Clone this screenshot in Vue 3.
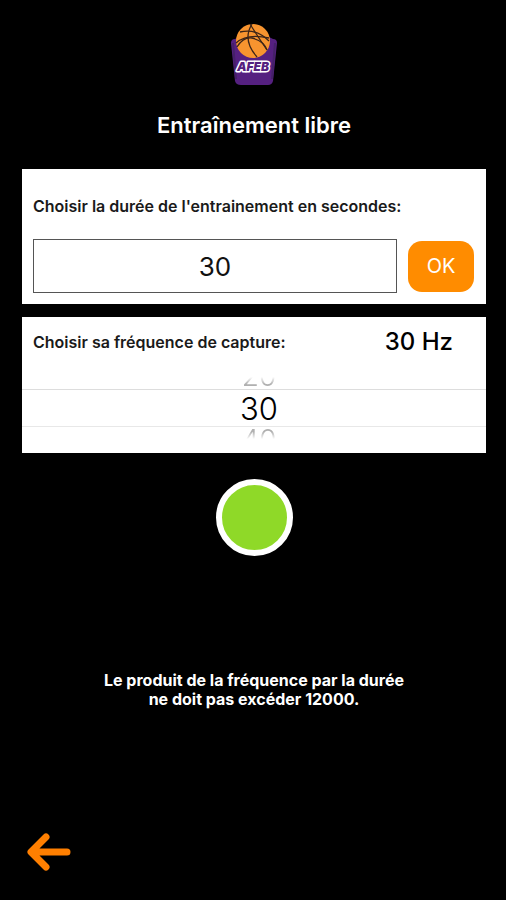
<template>
  <main class="page">
    <svg class="logo" viewBox="0 0 48 64" role="img" aria-label="AFEB">
      <path d="M1 20 Q1 16 5 16 L9 14 H39 L43 16 Q47 16 47 20 L43 58 Q42 62 38 62 H11 Q6 62 5 58 Z" fill="#552080" />
      <path d="M3 20 L6 56 M45 20 L42 56" stroke="#452068" stroke-width="2" fill="none" />
      <circle cx="23" cy="18" r="17" fill="#f7942f" />
      <g fill="none" stroke="#3b2418" stroke-width="1.3">
        <path d="M10 9 Q26 5 39 18" />
        <path d="M6 20 Q17 10 39 15" />
        <path d="M7 24 Q13 14 22 15 Q34 18 37 27" />
        <path d="M22 1 Q12 17 27 34" />
        <path d="M20 1 Q28 14 37 27" />
      </g>
      <text class="logo-text" x="23" y="48" text-anchor="middle">AFEB</text>
    </svg>

    <h1 class="title">Entraînement libre</h1>

    <form class="card duration" @submit.prevent="validate">
      <label class="label" for="duration">Choisir la durée de l'entrainement en secondes:</label>
      <div class="row">
        <input id="duration" v-model="duration" class="field" type="text" inputmode="numeric" />
        <button class="ok" type="submit">OK</button>
      </div>
    </form>

    <section class="card frequency">
      <div class="head">
        <span id="freq-label" class="label">Choisir sa fréquence de capture:</span>
        <span class="value">{{ frequency }} Hz</span>
      </div>
      <div class="wheel" role="radiogroup" aria-labelledby="freq-label">
        <label v-for="o in visible" :key="o.value" :class="['option', o.place]">
          <input v-model="frequency" type="radio" name="frequency" :value="o.value" />
          <span>{{ o.value }}</span>
        </label>
      </div>
    </section>

    <button
      :class="['record', { active: recording }]"
      type="button"
      aria-label="Démarrer"
      @click="toggle"
    ></button>

    <p class="notice">Le produit de la fréquence par la durée<br />ne doit pas excéder 12000.</p>

    <a class="back" href="#" aria-label="Retour">
      <svg viewBox="0 0 44 38">
        <path d="M19 4 L4 19 L19 34 M5 19 H40" />
      </svg>
    </a>
  </main>
</template>

<script setup>
import { ref, computed } from 'vue';

const MAX = 12000;
const frequencies = [10, 20, 30, 40, 50, 60];
const duration = ref('30');
const frequency = ref(30);
const recording = ref(false);

// valeur choisie et ses deux voisines dans la roue
const visible = computed(() => {
  const i = frequencies.indexOf(frequency.value);
  return [
    { value: frequencies[i - 1], place: 'before' },
    { value: frequencies[i], place: 'current' },
    { value: frequencies[i + 1], place: 'after' }
  ].filter((o) => o.value);
});

// limite la durée selon la fréquence
const validate = () => {
  const n = parseInt(duration.value, 10) || 0;
  duration.value = String(Math.min(n, Math.floor(MAX / frequency.value)));
};

const toggle = () => {
  validate();
  recording.value = !recording.value;
};
</script>

<style>
body {
  margin: 0;
  background: #000;
}
</style>

<style scoped>
.page {
  display: flex;
  flex-direction: column;
  align-items: center;
  box-sizing: border-box;
  min-height: 100vh;
  padding: 23px 20px 29px 22px;
  background: #000;
  color: #fff;
  font-family: Inter, "Liberation Sans", sans-serif;
}
.logo {
  width: 48px;
  height: 64px;
}
.logo-text {
  font-size: 12px;
  font-style: italic;
  font-weight: 900;
  fill: #552080;
  stroke: #fff;
  stroke-width: 3px;
  stroke-linejoin: round;
  paint-order: stroke;
}
.title {
  margin: 24px 0 30px;
  font-size: 22px;
  line-height: 28px;
  font-weight: 600;
}
.card {
  box-sizing: border-box;
  width: 100%;
  background: #fff;
  color: #000;
}
.duration {
  padding: 25px 12px 11px 11px;
}
.label {
  display: block;
  color: #1a1a1a;
  font-size: 16px;
  line-height: 24px;
  font-weight: 600;
}
.row {
  display: flex;
  align-items: center;
  gap: 11px;
  margin-top: 21px;
}
.field {
  flex: 1;
  min-width: 0;
  box-sizing: border-box;
  height: 54px;
  padding: 0;
  border: 1px solid #555;
  border-radius: 0;
  background: #fff;
  color: #111;
  font-family: inherit;
  font-size: 26px;
  text-align: center;
}
.ok {
  width: 66px;
  height: 51px;
  padding: 0;
  border: none;
  border-radius: 14px;
  background: #ff8c00;
  color: #fff;
  font-family: inherit;
  font-size: 20px;
}
.frequency {
  margin-top: 13px;
  padding-bottom: 14px;
}
.head {
  display: flex;
  align-items: center;
  justify-content: space-between;
  padding: 10px 33px 0 11px;
}
.value {
  font-size: 24px;
  line-height: 30px;
  font-weight: 500;
}
.wheel {
  margin-top: 20px;
}
.option {
  position: relative;
  display: flex;
  justify-content: center;
  padding-left: 10px;
  overflow: hidden;
}
.option input {
  position: absolute;
  opacity: 0;
}
.before,
.after {
  height: 12px;
  color: #b0b0b0;
  font-size: 28px;
  line-height: 26px;
  font-weight: 300;
}
/* les voisines s'estompent vers le bord de la roue */
.before {
  align-items: flex-end;
  mask-image: linear-gradient(to top, #000 40%, transparent);
}
.after {
  align-items: flex-start;
  mask-image: linear-gradient(to bottom, #000 40%, transparent);
}
.current {
  height: 36px;
  border-top: 1px solid #ddd;
  border-bottom: 1px solid #e8e8e8;
  font-size: 31px;
  line-height: 38px;
  font-weight: 300;
}
.record {
  box-sizing: border-box;
  width: 77px;
  height: 77px;
  margin-top: 26px;
  padding: 0;
  border: 6px solid #fff;
  border-radius: 50%;
  background: #8fd928;
}
.record.active {
  background: #e02020;
}
.notice {
  margin: 115px 0 0;
  font-size: 16px;
  line-height: 19px;
  font-weight: 700;
  text-align: center;
}
.back {
  align-self: flex-start;
  margin-top: auto;
  margin-left: 5px;
}
.back svg {
  display: block;
  width: 44px;
  height: 38px;
  fill: none;
  stroke: #ff7f00;
  stroke-width: 7;
  stroke-linecap: round;
  stroke-linejoin: round;
}
</style>
